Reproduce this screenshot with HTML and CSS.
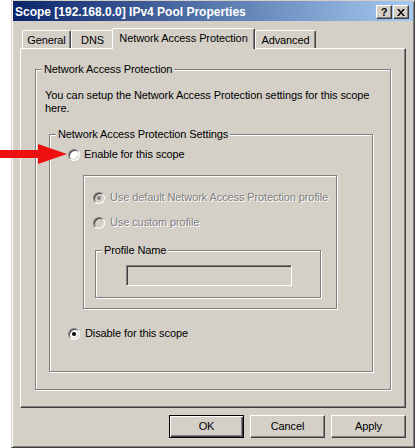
FILE: index.html
```html
<!DOCTYPE html>
<html>
<head>
<meta charset="utf-8">
<link rel="stylesheet" href="styles.css">
</head>
<body>
<div class="window">
  <div class="titlebar">
    <span class="title">Scope [192.168.0.0] IPv4 Pool Properties</span>
    <div class="caption-btns">
      <div class="cbtn help">?</div>
      <div class="cbtn close"><svg width="8" height="7" viewBox="0 0 8 7"><path d="M0 0h2l2 2.5L6 0h2L5 3.5 8 7H6L4 4.5 2 7H0l3-3.5z" fill="#000"/></svg></div>
    </div>
  </div>
  <div class="dialog">
    <div class="tabs">
      <div class="tab t-general">General</div>
      <div class="tab t-dns">DNS</div>
      <div class="tab t-nap active">Network Access Protection</div>
      <div class="tab t-adv">Advanced</div>
    </div>
    <div class="panel">
      <div class="group outer">
        <span class="legend">Network Access Protection</span>
        <p class="desc">You can setup the Network Access Protection settings for this scope<br>here.</p>
        <div class="group inner">
          <span class="legend">Network Access Protection Settings</span>
          <div class="row r-enable"><span class="radio"></span><span class="lbl">Enable for this scope</span></div>
          <div class="frame">
            <div class="row r-default dis"><span class="radio checked"></span><span class="lbl">Use default Network Access Protection profile</span></div>
            <div class="row r-custom dis"><span class="radio"></span><span class="lbl">Use custom profile</span></div>
            <div class="group profile">
              <span class="legend">Profile Name</span>
              <div class="textbox"></div>
            </div>
          </div>
          <div class="row r-disable"><span class="radio checked"></span><span class="lbl">Disable for this scope</span></div>
        </div>
      </div>
    </div>
    <div class="buttons">
      <div class="btn default">OK</div>
      <div class="btn">Cancel</div>
      <div class="btn">Apply</div>
    </div>
  </div>
</div>
<svg class="arrow" width="70" height="22" viewBox="0 0 70 22"><polygon points="0,6 38,6 38,0 67,10 38,20 38,14 0,14" fill="#ee1010"/></svg>
</body>
</html>
```
FILE: styles.css
```css
* { box-sizing: border-box; }
html, body { margin: 0; padding: 0; background: #fff; }
body {
  font-family: "Liberation Sans", Arial, sans-serif;
  font-size: 11px;
  line-height: 13px;
  letter-spacing: -0.1px;
  color: #000;
  position: relative;
  width: 415px;
  height: 448px;
  overflow: hidden;
}
.window {
  margin-left: 11px;
  width: 404px;
  height: 448px;
  background: #d4d0c8;
  border: 1px solid;
  border-color: #d4d0c8 #404040 #404040 #d4d0c8;
  box-shadow: inset 1px 1px 0 #fff, inset -1px -1px 0 #808080;
  padding: 0 1px 1px 1px;
}
.titlebar {
  height: 20px;
  display: flex;
  align-items: center;
  justify-content: space-between;
  padding: 2px 4px 0 2px;
  background: linear-gradient(to right, #0a246a, #a6caf0);
}
.title {
  color: #fff;
  font-weight: bold;
  font-size: 12px;
  line-height: 14px;
  letter-spacing: 0;
}
.caption-btns { display: flex; gap: 1px; }
.cbtn {
  width: 16px;
  height: 14px;
  background: #d4d0c8;
  border: 1px solid;
  border-color: #fff #404040 #404040 #fff;
  box-shadow: inset -1px -1px 0 #808080;
  display: flex;
  align-items: center;
  justify-content: center;
  font-weight: bold;
  font-size: 11px;
  line-height: 12px;
}
.cbtn.help { padding-bottom: 1px; }
.dialog { padding: 7px 7px 0 7px; }
.tabs {
  display: flex;
  align-items: flex-end;
  height: 20px;
  padding-left: 2px;
}
.tab {
  height: 18px;
  border: 1px solid;
  border-bottom: none;
  border-color: #fff #404040 transparent #fff;
  box-shadow: inset -1px 0 0 #808080;
  border-radius: 2px 2px 0 0;
  text-align: center;
  padding-top: 3px;
  background: #d4d0c8;
  white-space: nowrap;
}
.t-general { width: 49px; }
.t-dns { width: 43px; }
.t-nap { width: 143px; }
.t-adv { width: 61px; }
.tab.active {
  height: 21px;
  margin-left: -2px;
  margin-bottom: -1px;
  position: relative;
  z-index: 1;
  padding-top: 3px;
}
.panel {
  width: 386px;
  height: 360px;
  border: 1px solid;
  border-color: #fff #404040 #404040 #fff;
  box-shadow: inset -1px -1px 0 #808080;
  padding: 20px 0 0 14px;
}
.group {
  position: relative;
  border: 1px solid #808080;
  box-shadow: inset 1px 1px 0 #fff, 1px 1px 0 #fff;
}
.legend {
  position: absolute;
  top: -7px;
  left: 6px;
  padding: 0 2px;
  background: #d4d0c8;
  white-space: nowrap;
}
.outer {
  width: 356px;
  height: 321px;
  padding: 19px 0 0 9px;
}
.desc { margin: 0; }
.inner {
  width: 324px;
  height: 238px;
  margin: 19px 0 0 4px;
  padding: 13px 0 0 18px;
}
.row {
  display: flex;
  align-items: center;
  height: 13px;
  white-space: nowrap;
}
.radio {
  width: 12px;
  height: 12px;
  flex: none;
  border-radius: 50%;
  background: #fff;
  border: 1px solid;
  border-color: #808080 #fff #fff #808080;
  box-shadow: inset 1px 1px 0 #404040, inset -1px -1px 0 #d4d0c8;
  position: relative;
  margin-right: 4px;
}
.radio.checked::after {
  content: "";
  position: absolute;
  left: 3px;
  top: 3px;
  width: 4px;
  height: 4px;
  border-radius: 50%;
  background: #000;
}
.dis .radio { background: #d4d0c8; margin-right: 5px; }
.dis .radio.checked::after { background: #808080; }
.dis .lbl { color: #808080; text-shadow: 1px 1px 0 #fff; }
.frame {
  width: 254px;
  height: 134px;
  margin: 14px 0 0 15px;
  border: 1px solid #808080;
  box-shadow: inset 1px 1px 0 #fff, 1px 1px 0 #fff;
  padding: 15px 0 0 9px;
}
.r-custom { margin-top: 12px; }
.profile {
  width: 226px;
  height: 48px;
  margin: 21px 0 0 2px;
  padding: 14px 0 0 30px;
}
.textbox {
  width: 166px;
  height: 21px;
  border: 1px solid;
  border-color: #808080 #fff #fff #808080;
  box-shadow: inset 1px 1px 0 #404040, inset -1px -1px 0 #d4d0c8;
  background: #d4d0c8;
}
.r-disable { margin-top: 18px; }
.r-disable .radio { margin-right: 5px; }
.buttons {
  display: flex;
  justify-content: flex-end;
  gap: 6px;
  width: 386px;
  margin-top: 7px;
}
.btn {
  width: 75px;
  height: 23px;
  background: #d4d0c8;
  border: 1px solid;
  border-color: #fff #404040 #404040 #fff;
  box-shadow: inset -1px -1px 0 #808080;
  display: flex;
  align-items: center;
  justify-content: center;
}
.btn.default {
  border: 1px solid #000;
  box-shadow: inset 1px 1px 0 #fff, inset -1px -1px 0 #404040, inset -2px -2px 0 #808080;
}
.arrow {
  position: absolute;
  left: 0;
  top: 144px;
}
```
